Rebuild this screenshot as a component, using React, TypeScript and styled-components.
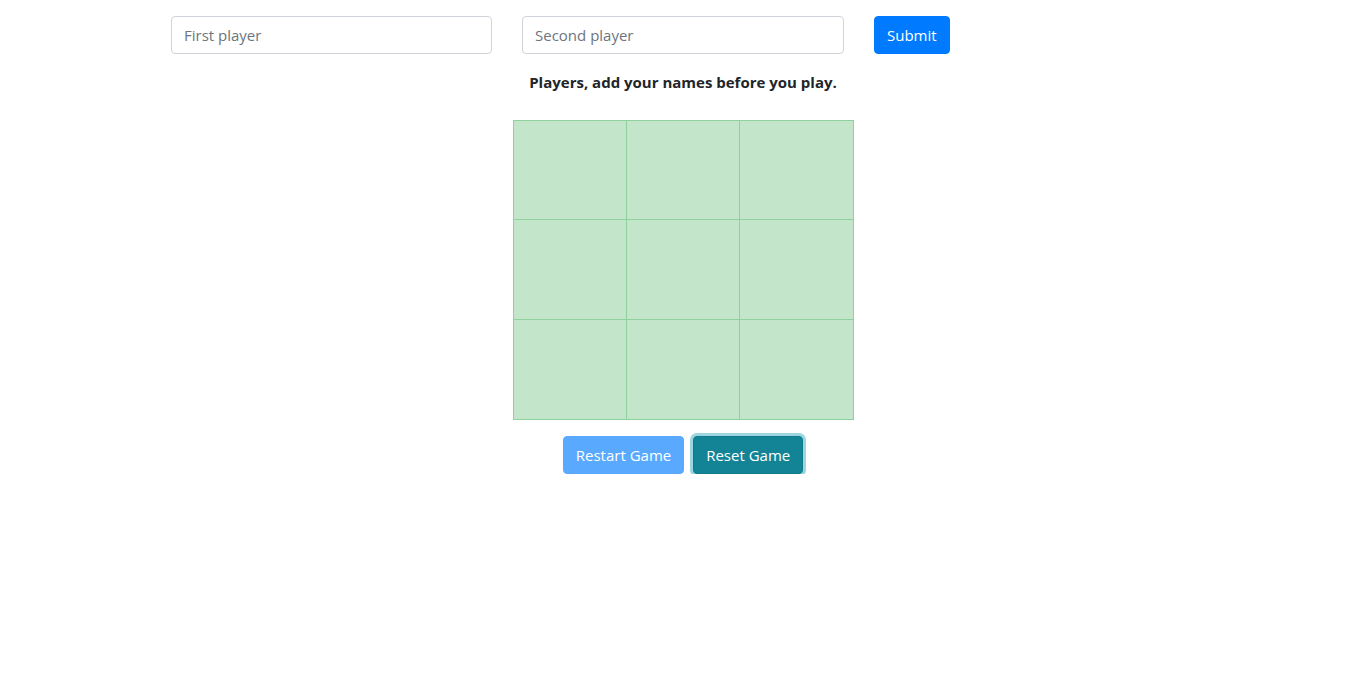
import React from "react";
import styled, { createGlobalStyle } from "styled-components";

const Global = createGlobalStyle`
  body {
    margin: 0;
    font-family: "Open Sans", "Noto Sans", sans-serif;
    color: #212529;
    background: #fff;
  }
  * { box-sizing: border-box; }
`;

const Page = styled.div`
  display: flex;
  flex-direction: column;
  align-items: center;
  padding-top: 16px;
`;

const Form = styled.div`
  align-self: flex-start;
  display: flex;
  gap: 30px;
  margin-left: 171px;
`;

const Input = styled.input<{ $w: number }>`
  width: ${(p) => p.$w}px;
  height: 38px;
  padding: 6px 12px;
  font-family: inherit;
  font-size: 15px;
  color: #495057;
  border: 1px solid #ced4da;
  border-radius: 4px;
  outline: none;
  &::placeholder { color: #6c757d; }
`;

const Button = styled.button<{ $bg: string; $border: string; $ring?: boolean }>`
  height: 38px;
  padding: 0 12px;
  font-family: inherit;
  font-size: 15px;
  color: #fff;
  background: ${(p) => p.$bg};
  border: 1px solid ${(p) => p.$border};
  border-radius: 4px;
  box-shadow: ${(p) => (p.$ring ? "0 0 0 3px rgba(58,176,195,.5)" : "none")};
  cursor: pointer;
`;

const Message = styled.p`
  margin: 16px 0 0;
  font-size: 15px;
  font-weight: 700;
  line-height: 24px;
`;

const Board = styled.div`
  margin-top: 26px;
  display: grid;
  grid-template-columns: 113px 113px 114px;
  grid-template-rows: 99px 100px 100px;
  border-top: 1px solid #8fd19e;
  border-left: 1px solid #8fd19e;
  background: #c3e6cb;
`;

const Cell = styled.div`
  border-right: 1px solid #8fd19e;
  border-bottom: 1px solid #8fd19e;
`;

const Actions = styled.div`
  display: flex;
  gap: 9px;
  margin-top: 16px;
`;

export default function App() {
  return (
    <>
      <Global />
      <Page>
        <Form>
          <Input $w={321} placeholder="First player" />
          <Input $w={322} placeholder="Second player" />
          <Button $bg="#007bff" $border="#007bff">Submit</Button>
        </Form>
        <Message>Players, add your names before you play.</Message>
        <Board>
          {Array.from({ length: 9 }).map((_, i) => (
            <Cell key={i} />
          ))}
        </Board>
        <Actions>
          <Button $bg="#59a9ff" $border="#59a9ff">Restart Game</Button>
          <Button $bg="#138496" $border="#117a8b" $ring>Reset Game</Button>
        </Actions>
      </Page>
    </>
  );
}
